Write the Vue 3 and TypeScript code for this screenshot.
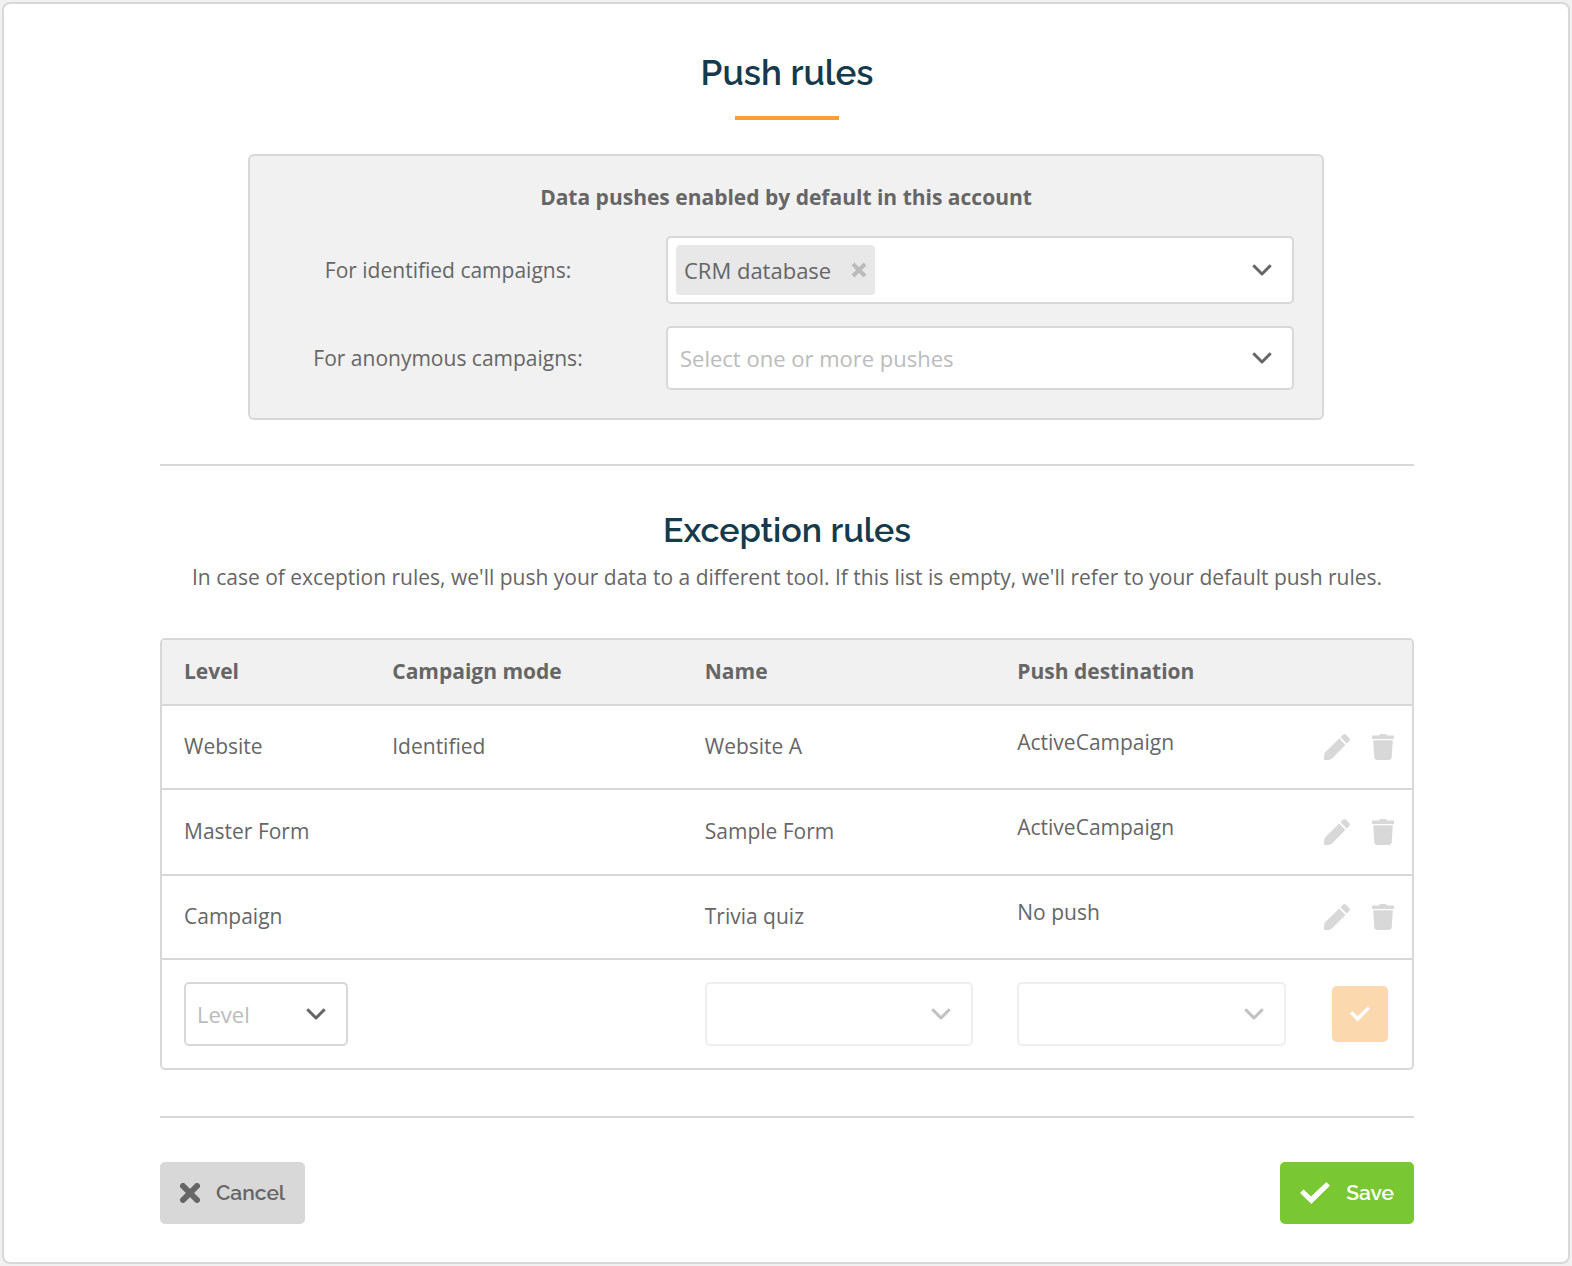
<script setup lang="ts">
import { ref } from 'vue'

interface Rule {
  level: string
  mode: string
  name: string
  destination: string
}

const identifiedPushes = ref<string[]>(['CRM database'])

const rules = ref<Rule[]>([
  { level: 'Website', mode: 'Identified', name: 'Website A', destination: 'ActiveCampaign' },
  { level: 'Master Form', mode: '', name: 'Sample Form', destination: 'ActiveCampaign' },
  { level: 'Campaign', mode: '', name: 'Trivia quiz', destination: 'No push' },
])

const level = ref('')

function removePush(push: string) {
  identifiedPushes.value = identifiedPushes.value.filter((p) => p !== push)
}

function removeRule(index: number) {
  rules.value.splice(index, 1)
}
</script>

<template>
  <main class="panel">
    <h1 class="title">Push rules</h1>

    <section class="defaults" aria-labelledby="defaults-title">
      <h2 id="defaults-title" class="defaults-title">Data pushes enabled by default in this account</h2>
      <div class="field">
        <label for="identified">For identified campaigns:</label>
        <div class="combo combo-filled">
          <span v-for="push in identifiedPushes" :key="push" class="tag">
            {{ push }}
            <button type="button" class="tag-remove" :aria-label="`Remove ${push}`" @click="removePush(push)">
              <svg width="16" height="16" viewBox="0 0 16 16"><path d="M2 2L14 14M14 2L2 14" stroke="currentColor" stroke-width="4" /></svg>
            </button>
          </span>
          <input id="identified" type="text" />
          <svg class="chevron" width="20" height="12" viewBox="0 0 20 12"><path d="M1.300 1.300L10 10L18.700 1.300" /></svg>
        </div>
      </div>
      <div class="field">
        <label for="anonymous">For anonymous campaigns:</label>
        <div class="combo">
          <input id="anonymous" type="text" placeholder="Select one or more pushes" />
          <svg class="chevron" width="20" height="12" viewBox="0 0 20 12"><path d="M1.300 1.300L10 10L18.700 1.300" /></svg>
        </div>
      </div>
    </section>

    <section class="exceptions">
      <h2 class="subtitle">Exception rules</h2>
      <p class="intro">
        In case of exception rules, we'll push your data to a different tool. If this list is empty, we'll refer to your default push rules.
      </p>

      <table class="rules">
        <colgroup>
          <col class="col-level" />
          <col class="col-wide" />
          <col class="col-wide" />
          <col class="col-wide" />
          <col />
        </colgroup>
        <thead>
          <tr>
            <th scope="col">Level</th>
            <th scope="col">Campaign mode</th>
            <th scope="col">Name</th>
            <th scope="col">Push destination</th>
            <td></td>
          </tr>
        </thead>
        <tbody>
          <tr v-for="(rule, i) in rules" :key="rule.name" class="rule">
            <td>{{ rule.level }}</td>
            <td>{{ rule.mode }}</td>
            <td>{{ rule.name }}</td>
            <td class="destination">{{ rule.destination }}</td>
            <td class="actions-cell">
              <div class="actions">
                <button type="button" class="icon-button" :aria-label="`Edit ${rule.name}`">
                  <svg width="26" height="26" viewBox="0 0 26 26" fill="currentColor">
                    <path d="M15.200 4.500L21.400 10.900L8.300 24.200Q6.800 25.900 4 26H.8Q0 26 0 25.200Q0 21.500 .7 18.700Z" />
                    <path d="M16.500 3.200L19.200 .6Q20.500 -.4 21.900 .6L25.400 4.300Q26.400 5.700 25.400 6.900L22.700 9.600Z" />
                  </svg>
                </button>
                <button type="button" class="icon-button" :aria-label="`Delete ${rule.name}`" @click="removeRule(i)">
                  <svg width="22" height="26" viewBox="0 0 22 26" fill="currentColor">
                    <path d="M7 1.500Q7.300 0 8.700 0H13.300Q14.700 0 15 1.500H21.300Q22 1.500 22 2.200V4.300Q22 5 21.300 5H.7Q0 5 0 4.300V2.200Q0 1.500 .7 1.500Z" />
                    <path d="M1.200 6.200H20.800L19.700 23.300Q19.400 26 16.800 26H5.200Q2.600 26 2.300 23.300Z" />
                  </svg>
                </button>
              </div>
            </td>
          </tr>
          <tr class="new-rule">
            <td>
              <div class="select">
                <select v-model="level" aria-label="Level">
                  <option value="">Level</option>
                  <option>Website</option>
                  <option>Master Form</option>
                  <option>Campaign</option>
                </select>
                <svg class="chevron" width="20" height="12" viewBox="0 0 20 12"><path d="M1.300 1.300L10 10L18.700 1.300" /></svg>
              </div>
            </td>
            <td></td>
            <td>
              <div class="select disabled">
                <select disabled aria-label="Name"></select>
                <svg class="chevron" width="20" height="12" viewBox="0 0 20 12"><path d="M1.300 1.300L10 10L18.700 1.300" /></svg>
              </div>
            </td>
            <td>
              <div class="select disabled">
                <select disabled aria-label="Push destination"></select>
                <svg class="chevron" width="20" height="12" viewBox="0 0 20 12"><path d="M1.300 1.300L10 10L18.700 1.300" /></svg>
              </div>
            </td>
            <td class="confirm-cell">
              <button type="button" class="confirm" disabled aria-label="Add rule">
                <svg width="20" height="16" viewBox="0 0 20 16" fill="currentColor"><path d="M2.300 5.200L7.700 10.300L17.700 .4L20 2.700L7.700 15.600L0 7.700Z" /></svg>
              </button>
            </td>
          </tr>
        </tbody>
      </table>
    </section>

    <footer class="footer">
      <button type="button" class="button cancel">
        <svg width="20" height="20" viewBox="0 0 20 20"><path d="M3 3L17 17M17 3L3 17" stroke="currentColor" stroke-width="6" stroke-linecap="round" /></svg>
        Cancel
      </button>
      <button type="button" class="button save">
        <svg width="30" height="22" viewBox="0 0 30 22" fill="currentColor" stroke="currentColor" stroke-linejoin="round"><path d="M3.500 8L11 14.900L26.400 .6L29.400 3.800L11.300 21.400L.6 11Z" /></svg>
        Save
      </button>
    </footer>
  </main>
</template>

<style>
body {
  background: #f1f1f1;
}
</style>

<style scoped>
* {
  box-sizing: border-box;
}

.panel {
  margin: 2px;
  padding: 40px 154px 38px 156px;
  background: #fff;
  border: 2px solid #d8d8d8;
  border-radius: 8px;
  color: #666;
  font-family: "Open Sans", sans-serif;
  font-size: 21px;
  line-height: 30px;
}

h1,
h2,
p {
  margin: 0;
}

button,
input,
select {
  font: inherit;
  color: inherit;
}

button {
  padding: 0;
  border: 0;
  background: none;
  cursor: pointer;
}

svg {
  display: block;
  flex: none;
}

.title,
.subtitle {
  color: #153a4c;
  font-family: Raleway, Lato, sans-serif;
  font-size: 35px;
  font-weight: 600;
  line-height: 58px;
  text-align: center;
}

.title::after {
  content: "";
  display: block;
  width: 104px;
  height: 4px;
  margin: 14px auto 0;
  background: #fa9f33;
}

.subtitle {
  font-size: 34px;
  line-height: 60px;
}

.defaults {
  display: flex;
  flex-direction: column;
  gap: 22px;
  margin: 34px 90px 44px 88px;
  padding: 28px;
  background: #f1f1f1;
  border: 2px solid #d8d8d8;
  border-radius: 6px;
}

.defaults-title {
  margin-bottom: 4px;
  font-size: 21px;
  line-height: 26px;
  text-align: center;
}

.field {
  display: grid;
  grid-template-columns: 340fr 628fr;
  column-gap: 48px;
  align-items: center;
  text-align: center;
}

.combo {
  display: flex;
  align-items: center;
  height: 64px;
  padding: 0 20px 0 12px;
  background: #fff;
  border: 2px solid #d8d8d8;
  border-radius: 5px;
  font-size: 22px;
}

.combo-filled {
  height: 68px;
  padding-left: 8px;
}

.combo input {
  flex: 1;
  min-width: 0;
  height: 100%;
  padding: 0;
  border: 0;
  outline: 0;
  background: none;
}

.combo input::placeholder {
  color: #bbb;
  opacity: 1;
}

.tag {
  display: flex;
  align-items: center;
  gap: 20px;
  height: 50px;
  padding: 0 8px;
  background: #e8e8e8;
  border-radius: 4px;
}

.tag-remove {
  color: #bbb;
}

.chevron {
  fill: none;
  stroke: #666;
  stroke-width: 3px;
  stroke-linejoin: round;
  pointer-events: none;
}

.exceptions {
  padding: 34px 0 46px;
  border: solid #d8d8d8;
  border-width: 2px 0;
}

.intro {
  margin-bottom: 44px;
  line-height: 34px;
  text-align: center;
}

.rules {
  width: 100%;
  table-layout: fixed;
  border: 2px solid #d8d8d8;
  border-radius: 5px;
  border-spacing: 0;
  overflow: hidden;
}

.col-level {
  width: 16.66%;
}

.col-wide {
  width: 25%;
}

.rules th,
.rules td {
  height: 84px;
  padding: 0 22px 2px;
  border-bottom: 2px solid #d8d8d8;
  text-align: left;
}

.rules .rule:nth-child(even) td {
  height: 86px;
}

.rules thead th,
.rules thead td {
  height: 66px;
  background: #f1f1f1;
}

.rules .destination {
  padding-bottom: 10px;
}

.rules .actions-cell {
  padding: 0 18px 0 0;
}

.actions {
  display: flex;
  justify-content: flex-end;
  gap: 22px;
}

.icon-button {
  color: #d8d8d8;
}

.rules .new-rule td {
  height: 108px;
  padding-bottom: 0;
  border-bottom: 0;
}

.select {
  display: grid;
  grid-template-columns: 1fr 20px 22px;
  align-items: center;
}

.select select {
  grid-area: 1 / 1 / 2 / 4;
  width: 100%;
  height: 64px;
  padding: 0 11px;
  appearance: none;
  background: #fff;
  border: 2px solid #d8d8d8;
  border-radius: 5px;
  color: #bbb;
  font-size: 22px;
}

.select .chevron {
  grid-area: 1 / 2;
}

.select.disabled {
  opacity: 0.4;
}

.select.disabled select {
  opacity: 1;
}

.rules .confirm-cell {
  padding: 0 24px 0 0;
}

.confirm {
  display: flex;
  align-items: center;
  justify-content: center;
  width: 56px;
  height: 56px;
  margin-left: auto;
  background: #fcd8ae;
  border-radius: 5px;
  color: #fff;
}

.footer {
  display: flex;
  justify-content: space-between;
  padding-top: 44px;
}

.button {
  display: flex;
  align-items: center;
  gap: 16px;
  height: 62px;
  padding: 0 20px;
  border-radius: 5px;
  font-family: Raleway, Lato, sans-serif;
  font-size: 21px;
  font-weight: 600;
}

.cancel {
  background: #d8d8d8;
}

.save {
  background: #79c732;
  color: #fff;
}
</style>
